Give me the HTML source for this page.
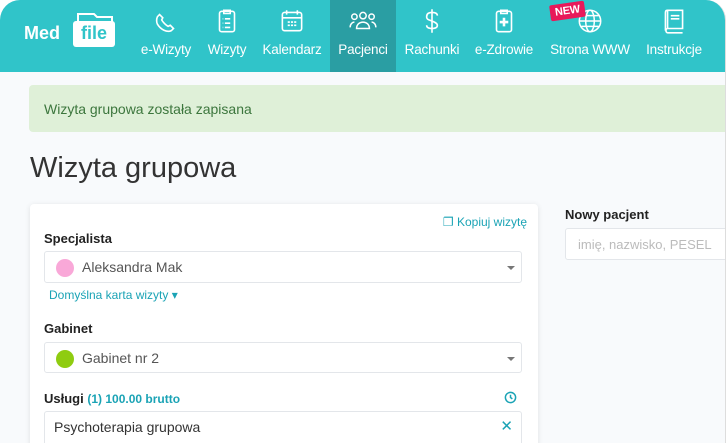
<!DOCTYPE html>
<html><head><meta charset="utf-8"><style>
*{box-sizing:border-box;margin:0;padding:0}
body{width:727px;height:443px;overflow:hidden;background:#fff;font-family:"Liberation Sans",sans-serif;position:relative}
.frame{position:absolute;left:0;top:0;width:726px;height:443px;background:#f8fafc;border-radius:20px 20px 0 0;overflow:hidden;border-right:1px solid #ddd}
.hdr{position:absolute;left:0;top:0;width:100%;height:72px;background:#30c4c9}
.nav{position:absolute;top:0;height:72px;text-align:center;color:#fff;font-size:13.5px;letter-spacing:-.2px}
.nav svg{position:absolute;top:6px;left:50%;margin-left:-15px}
.nav span{position:absolute;top:42px;left:0;right:0;white-space:nowrap}
.act{background:#2a9ea3}
.alert{position:absolute;left:29px;top:85px;width:700px;height:47px;background:#dff0d8;border-radius:4px;color:#3c763d;font-size:14px;padding:16px 15px}
h1{position:absolute;left:30px;top:152px;font-size:29px;font-weight:300;color:#333}
.card{position:absolute;left:30px;top:204px;width:508px;height:260px;background:#fff;border-radius:4px;box-shadow:0 1px 6px rgba(0,0,0,.1)}
.lbl{position:absolute;font-size:13px;font-weight:bold;color:#222}
.box{position:absolute;background:#fff;border:1px solid #e3e6ea;border-radius:3px}
.teal{color:#1aa3b5}
.dot{position:absolute;left:11px;top:7px;width:18px;height:18px;border-radius:50%}
.sel{position:absolute;left:37px;top:7px;font-size:14px;color:#555}
.car{position:absolute;right:6px;top:14px;border:4px solid transparent;border-top:4px solid #777;border-bottom:0}
</style></head><body>
<div class="frame">
<div class="hdr">
<div style="position:absolute;left:24px;top:23px;color:#fff;font-weight:bold;font-size:18px">Med</div>
<svg style="position:absolute;left:70px;top:12px" width="46" height="36" viewBox="0 0 46 36"><path d="M8 2h16l3 3h15v6H8z" fill="none" stroke="#fff" stroke-width="2"/><rect x="3" y="9" width="42" height="26" rx="3" fill="#fff"/></svg>
<div style="position:absolute;left:73px;top:23px;width:42px;color:#30c4c9;font-weight:bold;font-size:18px;text-align:center">file</div>
<div class="nav" style="left:135px;width:62px"><svg width="30" height="30" viewBox="0 0 28 28" fill="none" stroke="#fff" stroke-width="1.5"><path d="M6 17c3 5 9 8 13 6l2-2-3-3-2 1c-2-1-5-4-6-6l1-2-3-3-2 2c-1 2-1 5 0 7z"/></svg><span>e-Wizyty</span></div>
<div class="nav" style="left:201px;width:52px"><svg width="30" height="30" viewBox="0 0 28 28" fill="none" stroke="#fff" stroke-width="1.5"><rect x="7" y="5" width="14" height="19" rx="2"/><path d="M11 4h6v3h-6zM12 12h5M12 16h5M12 20h5M10 12h.5M10 16h.5M10 20h.5"/></svg><span>Wizyty</span></div>
<div class="nav" style="left:257px;width:70px"><svg width="30" height="30" viewBox="0 0 28 28" fill="none" stroke="#fff" stroke-width="1.5"><rect x="5" y="6" width="18" height="17" rx="2"/><path d="M5 11h18M9 4v4M19 4v4M10 15h2M13 15h2M16 15h2M10 18h2M13 18h2M16 18h2"/></svg><span>Kalendarz</span></div>
<div class="nav act" style="left:330px;width:66px"><svg width="30" height="30" viewBox="0 0 28 28" fill="none" stroke="#fff" stroke-width="1.4"><circle cx="14" cy="9" r="3"/><circle cx="6" cy="10" r="2.5"/><circle cx="22" cy="10" r="2.5"/><path d="M8 21c0-4 3-6 6-6s6 2 6 6zM2 20c0-3 2-5 4-5M26 20c0-3-2-5-4-5"/></svg><span>Pacjenci</span></div>
<div class="nav" style="left:399px;width:66px"><svg width="30" height="30" viewBox="0 0 28 28" fill="none" stroke="#fff" stroke-width="1.5"><path d="M14 3v22M19 9c0-2-2-3-5-3s-5 1-5 4 3 3 5 4 5 2 5 4-2 3-5 3-5-1-5-3"/></svg><span>Rachunki</span></div>
<div class="nav" style="left:469px;width:70px"><svg width="30" height="30" viewBox="0 0 28 28" fill="none" stroke="#fff" stroke-width="1.5"><rect x="7" y="5" width="14" height="19" rx="2"/><path d="M11 4h6v3h-6z"/><path d="M14 11v8M10 15h8" stroke-width="2.4"/></svg><span>e-Zdrowie</span></div>
<div class="nav" style="left:545px;width:90px"><svg width="30" height="30" viewBox="0 0 28 28" fill="none" stroke="#fff" stroke-width="1.4"><circle cx="14" cy="14" r="10"/><ellipse cx="14" cy="14" rx="4" ry="10"/><path d="M4 14h20M6 9h16M6 19h16"/></svg><span>Strona WWW</span>
<div style="position:absolute;left:5px;top:3px;background:#e8195a;color:#fff;font-size:11px;font-weight:bold;padding:2px 5px;border-radius:2px;transform:rotate(-8deg)">NEW</div></div>
<div class="nav" style="left:640px;width:68px"><svg width="30" height="30" viewBox="0 0 28 28" fill="none" stroke="#fff" stroke-width="1.5"><path d="M8 4h14v17H8zM8 21c-2 0-2 4 0 4h14M8 4C6 4 6 5 6 7v16M11 9h8M11 12h8"/></svg><span>Instrukcje</span></div>
</div>
<div class="alert">Wizyta grupowa została zapisana</div>
<h1>Wizyta grupowa</h1>
<div class="card">
<div class="teal" style="position:absolute;right:11px;top:11px;font-size:12px">❐ Kopiuj wizytę</div>
<div class="lbl" style="left:14px;top:27px">Specjalista</div>
<div class="box" style="left:14px;top:47px;width:478px;height:32px"><div class="dot" style="background:#f9a8d8"></div><div class="sel">Aleksandra Mak</div><div class="car"></div></div>
<div class="teal" style="position:absolute;left:19px;top:84px;font-size:12px">Domyślna karta wizyty ▾</div>
<div class="lbl" style="left:14px;top:117px">Gabinet</div>
<div class="box" style="left:14px;top:138px;width:478px;height:31px"><div class="dot" style="background:#8fcc10"></div><div class="sel">Gabinet nr 2</div><div class="car"></div></div>
<div class="lbl" style="left:14px;top:187px">Usługi <span class="teal" style="font-size:12px">(1) 100.00 brutto</span></div>
<svg style="position:absolute;left:474px;top:187px" width="13" height="13" viewBox="0 0 14 14" fill="none" stroke="#1aa3b5" stroke-width="1.6"><circle cx="7" cy="7" r="5.5"/><path d="M7 4v3l2 1.5"/></svg>
<div class="box" style="left:14px;top:207px;width:478px;height:40px"><div style="position:absolute;left:9px;top:7px;font-size:14px;color:#333">Psychoterapia grupowa</div><div class="teal" style="position:absolute;right:8px;top:5px;font-size:15px">✕</div></div>
</div>
<div class="lbl" style="left:565px;top:207px">Nowy pacjent</div>
<div class="box" style="left:565px;top:228px;width:170px;height:32px"><div style="position:absolute;left:12px;top:8px;font-size:13px;color:#bbb">imię, nazwisko, PESEL</div></div>
</div>
</body></html>
